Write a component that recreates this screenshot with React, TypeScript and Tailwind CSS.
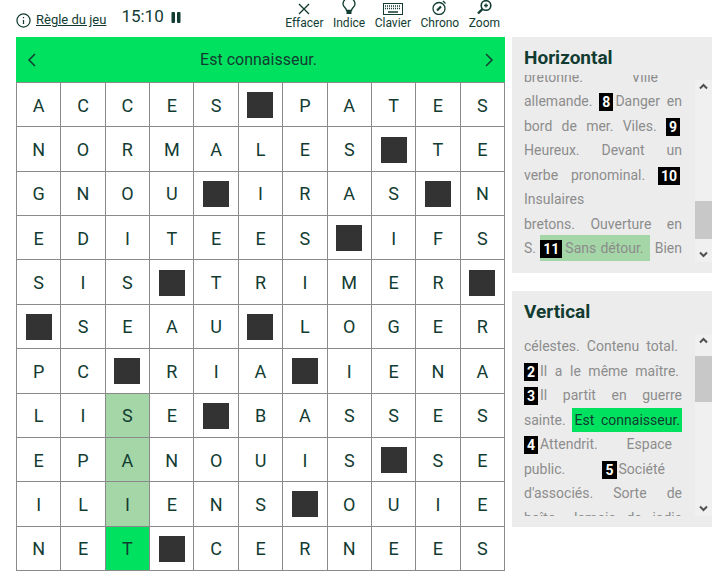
import React from 'react';

const rows = [
  'ACCES#PATES',
  'NORMALES#TE',
  'GNOU#IRAS#N',
  'EDITEES#IFS',
  'SIS#TRIMER#',
  '#SEAU#LOGER',
  'PC#RIA#IENA',
  'LISE#BASSES',
  'EPANOUIS#SE',
  'ILIENS#OUIE',
  'NET#CERNEES',
];

const Num = ({ n }: { n: number }) => (
  <span className="mr-[2px] inline-block bg-black px-[3px] align-[-1px] text-[14px] leading-[18px] font-bold text-white">{n}</span>
);

const Cell = ({ ch, r, c }: { ch: string; r: number; c: number }) => {
  let bg = 'bg-white';
  if (c === 2 && r >= 7 && r <= 9) bg = 'bg-[#a5d6a7]';
  if (c === 2 && r === 10) bg = 'bg-[#00e25f]';
  return (
    <div className={`flex items-center justify-center border-r border-b border-[#8a8a8a] pt-[1px] ${bg}`}>
      {ch === '#' ? <div className="h-[26px] w-[26px] bg-[#333333]" /> : ch}
    </div>
  );
};

const Tool = ({ label, children }: { label: string; children: React.ReactNode }) => (
  <div className="flex flex-col items-center">
    <div className="flex h-[15px] items-end">{children}</div>
    <span className="mt-[1px] text-[12px] leading-[14px]">{label}</span>
  </div>
);

const Scrollbar = ({ thumbTop, thumbH }: { thumbTop: number; thumbH: number }) => (
  <div className="relative h-full w-[17px] shrink-0 bg-[#f0f0f0]">
    <div className="absolute left-0 w-full bg-[#c8c8c8]" style={{ top: thumbTop, height: thumbH }} />
    <svg className="absolute top-[2px] left-[4px]" width="9" height="9" viewBox="0 0 9 9" fill="none" stroke="#505050" strokeWidth="2">
      <path d="M1 6.500 4.500 3 8 6.500" />
    </svg>
    <svg className="absolute bottom-[3px] left-[4px]" width="9" height="9" viewBox="0 0 9 9" fill="none" stroke="#505050" strokeWidth="2">
      <path d="M1 2.500 4.500 6 8 2.500" />
    </svg>
  </div>
);

const Line = ({ children, className = '' }: { children: React.ReactNode; className?: string }) => (
  <div className={`h-[24.500px] text-justify [text-align-last:justify] ${className}`}>{children}</div>
);

const App: React.FC = () => {
  return (
    <div className="flex h-[578px] w-[716px] overflow-hidden bg-white font-['Roboto',sans-serif] text-[#123c32]">
      <div className="ml-4 w-[489px] shrink-0">
        {/* barre du haut */}
        <div className="flex h-[37px] items-start">
          <svg className="mt-[13px]" width="15" height="15" viewBox="0 0 24 24" fill="none" stroke="#123c32" strokeWidth="2">
            <circle cx="12" cy="12" r="10.500" />
            <path d="M12 11v6.500M12 6.500v2" />
          </svg>
          <a className="mt-[11px] ml-[5px] text-[13px] leading-[17px] underline">Règle du jeu</a>
          <span className="mt-[7px] ml-[15px] text-[17px] leading-[19px]">15:10</span>
          <svg className="mt-[12px] ml-[7px]" width="11" height="11" viewBox="0 0 11 11" fill="#123c32">
            <rect x="0.500" y="0" width="3.500" height="11" rx="1" />
            <rect x="6" y="0" width="3.500" height="11" rx="1" />
          </svg>
          <div className="mr-[5px] ml-auto flex gap-[9.500px]">
            <Tool label="Effacer">
              <svg width="12" height="12" viewBox="0 0 12 12" stroke="#123c32" strokeWidth="1.400">
                <path d="M1 1 11 11M11 1 1 11" />
              </svg>
            </Tool>
            <Tool label="Indice">
              <svg width="14" height="16" viewBox="0 0 14 16" fill="none" stroke="#123c32" strokeWidth="1.300">
                <path d="M4.500 11.500C4.500 9 1 8 1 5a6 6 0 0 1 12 0c0 3-3.500 4-3.500 6.500z" />
                <path d="M4.500 13.500h5" strokeWidth="3" />
              </svg>
            </Tool>
            <Tool label="Clavier">
              <svg width="20" height="12" viewBox="0 0 20 12" fill="none" stroke="#123c32">
                <rect x="0.500" y="0.500" width="19" height="11" />
                <path d="M2 3h16M2 5.500h16" strokeDasharray="1 1" strokeWidth="1.500" />
                <path d="M5 9h10" strokeWidth="1.500" />
              </svg>
            </Tool>
            <Tool label="Chrono">
              <svg width="15" height="15" viewBox="0 0 15 15" fill="none" stroke="#123c32" strokeWidth="1.300">
                <circle cx="7" cy="8.500" r="6" />
                <path d="M5 10.500 9 6.500" strokeWidth="2.200" />
                <path d="M11 1 13.500 3.500" />
              </svg>
            </Tool>
            <Tool label="Zoom">
              <svg width="15" height="15" viewBox="0 0 15 15" fill="none" stroke="#123c32" strokeWidth="1.600">
                <circle cx="9" cy="5.500" r="4.800" />
                <path d="M5.500 9 1 13.500" strokeWidth="2.400" />
                <path d="M7 5.500h4M9 3.500v4" strokeWidth="1.300" />
              </svg>
            </Tool>
          </div>
        </div>

        {/* barre de la définition */}
        <div className="flex h-[45px] items-center justify-between bg-[#00e25f] px-[11px] text-[16px]">
          <svg width="10" height="14" viewBox="0 0 10 14" fill="none" stroke="#123c32" strokeWidth="1.500">
            <path d="M8 1 2 7l6 6" />
          </svg>
          <span className="mr-[4px]">Est connaisseur.</span>
          <svg width="10" height="14" viewBox="0 0 10 14" fill="none" stroke="#123c32" strokeWidth="1.500">
            <path d="M2 1l6 6-6 6" />
          </svg>
        </div>

        {/* grille */}
        <div className="grid h-[489px] grid-cols-11 grid-rows-11 border-t border-l border-[#8a8a8a] text-[18px]">
          {rows.map((row, r) =>
            row.split('').map((ch, c) => <Cell key={`${r}-${c}`} ch={ch} r={r} c={c} />),
          )}
        </div>
      </div>

      {/* définitions */}
      <div className="ml-[7px] w-[200px] shrink-0 text-[14px] text-[#8c8c8c]">
        <section className="mt-[37px] h-[236px] bg-[#ececec]">
          <h2 className="h-[38px] pt-[10px] pl-[12px] text-[19px] leading-[22px] font-bold text-[#123c32]">Horizontal</h2>
          <div className="flex h-[187px]">
            <div className="ml-[12px] w-[158px] shrink-0 overflow-hidden leading-[24.500px]">
              <div className="-mt-[10.500px]">
                <Line className="pr-[24px]">bretonne. Ville</Line>
                <Line>allemande. <Num n={8} />Danger en</Line>
                <Line>bord de mer. Viles. <Num n={9} /></Line>
                <Line>Heureux. Devant un</Line>
                <Line>verbe pronominal. <Num n={10} /></Line>
                <Line>Insulaires</Line>
                <Line>bretons. Ouverture en</Line>
                <Line>
                  S. <span className="bg-[#a5d6a7] py-[5px] pr-[7px]"><Num n={11} /><span className="ml-[1px]">Sans détour.</span></span> Bien
                </Line>
              </div>
            </div>
            <div className="mt-[5px] ml-[13px] h-[182px]">
              <Scrollbar thumbTop={121} thumbH={38} />
            </div>
          </div>
        </section>

        <section className="mt-[18px] h-[236px] bg-[#ececec]">
          <h2 className="h-[43px] pt-[10px] pl-[12px] text-[19px] leading-[22px] font-bold text-[#123c32]">Vertical</h2>
          <div className="flex h-[182px]">
            <div className="ml-[12px] w-[158px] shrink-0 overflow-hidden leading-[24.500px]">
              <Line className="pr-[4px]">célestes. Contenu total.</Line>
              <Line className="pr-[3px]"><Num n={2} />Il a le même maître.</Line>
              <Line><Num n={3} />Il partit en guerre</Line>
              <Line>
                sainte. <span className="bg-[#00e25f] px-[2px] py-[4px] text-[#123c32]">Est connaisseur.</span>
              </Line>
              <Line className="pr-[10px]"><Num n={4} />Attendrit. Espace</Line>
              <Line className="pr-[17px]">public. <Num n={5} />Société</Line>
              <Line>d'associés. Sorte de</Line>
              <Line>boîte. Jamais de jadis</Line>
            </div>
            <div className="ml-[13px] h-[182px]">
              <Scrollbar thumbTop={22} thumbH={46} />
            </div>
          </div>
        </section>
      </div>
    </div>
  );
};

export default App;
